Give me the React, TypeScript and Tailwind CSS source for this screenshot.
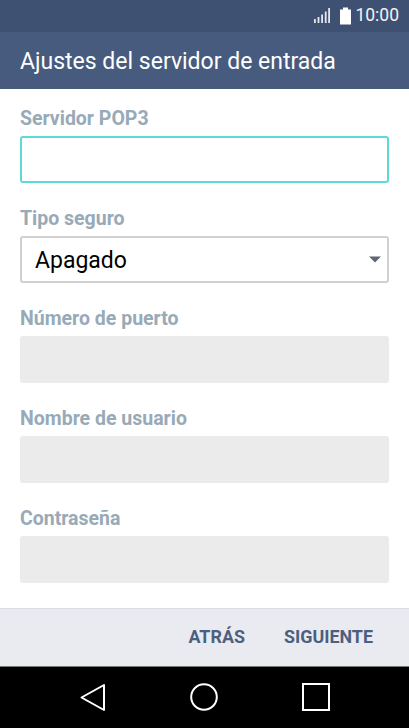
function Field({ label, children }: { label: string; children: React.ReactNode }) {
  return (
    <div className="h-[100px] px-5">
      <div className="flex h-[36px] items-center pt-[2px] text-[19.5px] font-bold leading-none text-[#98aab7]">{label}</div>
      {children}
    </div>
  )
}

function DisabledInput() {
  return <div className="h-[47px] rounded-[3px] bg-[#ebebeb]" />
}

export default function App() {
  return (
    <div className="flex h-[728px] w-[409px] flex-col overflow-hidden bg-white font-['Roboto',sans-serif]">
      <div className="flex h-[32px] items-center justify-end bg-[#3e5173] pr-[10px] text-white">
        <svg width="18" height="18" viewBox="0 0 18 18" className="mr-[8px]" fill="#e4e7ec">
          <rect x="1" y="12" width="1.8" height="4" />
          <rect x="4.600" y="10" width="1.8" height="6" />
          <rect x="8.200" y="7.500" width="1.8" height="8.500" />
          <rect x="11.800" y="4.500" width="1.8" height="11.500" />
          <rect x="15.200" y="1" width="1.8" height="15" />
        </svg>
        <svg width="13" height="18" viewBox="0 0 13 18" className="mr-[3px]" fill="#ffffff">
          <path d="M4 0.5h5v2h3v15H1v-15h3z" />
        </svg>
        <span className="text-[17.5px] leading-none text-[#f1f3f6]">10:00</span>
      </div>
      <div className="flex h-[57px] items-center bg-[#475b7e] px-5 pt-[3px] text-[23px] text-white">
        Ajustes del servidor de entrada
      </div>
      <div className="flex-1 bg-white">
        <div className="h-[11px]" />
        <Field label="Servidor POP3">
          <div className="h-[47px] rounded-[3px] border-2 border-[#5adbd7]" />
        </Field>
        <Field label="Tipo seguro">
          <div className="flex h-[47px] items-center justify-between rounded-[3px] border-2 border-[#d0d0d0] pl-[13px] pr-[5px] pt-[3px] text-[23px] text-black">
            <span>Apagado</span>
            <svg width="14" height="7" viewBox="0 0 14 7" fill="#5f6770" className="mb-[3px]">
              <path d="M1 0.5h12L7 6.5z" />
            </svg>
          </div>
        </Field>
        <Field label="Número de puerto">
          <DisabledInput />
        </Field>
        <Field label="Nombre de usuario">
          <DisabledInput />
        </Field>
        <Field label="Contraseña">
          <DisabledInput />
        </Field>
      </div>
      <div className="flex h-[58px] items-center justify-end gap-[39px] border-t border-[#d9dce2] bg-[#e9ebf0] pr-[36px] text-[17.9px] font-bold text-[#4d5f80]">
        <span>ATRÁS</span>
        <span>SIGUIENTE</span>
      </div>
      <div className="flex h-[62px] items-center justify-center gap-[84px] border-t border-[#777777] bg-black pb-[2px] pr-[2px]">
        <svg width="28" height="28" viewBox="0 0 28 28" fill="none" stroke="#ffffff" strokeWidth="2" strokeLinejoin="round">
          <path d="M26 2v25L3.500 14.500z" />
        </svg>
        <svg width="28" height="28" viewBox="0 0 28 28" fill="none" stroke="#ffffff" strokeWidth="2">
          <circle cx="14" cy="14" r="12.800" />
        </svg>
        <svg width="28" height="28" viewBox="0 0 28 28" fill="none" stroke="#ffffff" strokeWidth="2">
          <rect x="1" y="1" width="26" height="26" />
        </svg>
      </div>
    </div>
  )
}
